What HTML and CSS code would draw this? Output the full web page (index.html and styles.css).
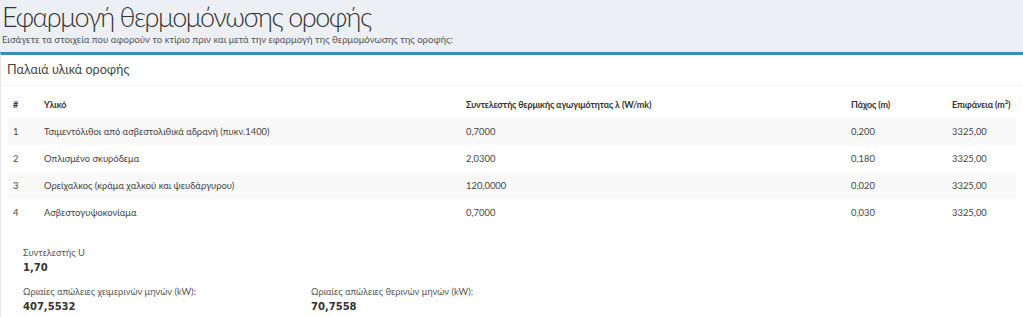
FILE: index.html
```html
<!DOCTYPE html>
<html lang="el">
<head>
<meta charset="utf-8">
<title>Εφαρμογή θερμομόνωσης οροφής</title>
<link rel="stylesheet" href="styles.css">
</head>
<body>
<section class="content-header">
  <h1>Εφαρμογή θερμομόνωσης οροφής</h1>
  <p class="lead">Εισάγετε τα στοιχεία που αφορούν το κτίριο πριν και μετά την εφαρμογή της θερμομόνωσης της οροφής:</p>
</section>
<div class="box">
  <div class="box-header"><h3 class="box-title">Παλαιά υλικά οροφής</h3></div>
  <div class="box-body">
    <table class="table">
      <colgroup>
        <col class="c-num"><col class="c-mat"><col class="c-lam"><col class="c-thk"><col class="c-area">
      </colgroup>
      <thead>
        <tr><th>#</th><th>Υλικό</th><th>Συντελεστής θερμικής αγωγιμότητας λ (W/mk)</th><th>Πάχος (m)</th><th>Επιφάνεια (m<sup>2</sup>)</th></tr>
      </thead>
      <tbody>
        <tr><td>1</td><td>Τσιμεντόλιθοι από ασβεστολιθικά αδρανή (πυκν.1400)</td><td>0,7000</td><td>0,200</td><td>3325,00</td></tr>
        <tr><td>2</td><td>Οπλισμένο σκυρόδεμα</td><td>2,0300</td><td>0,180</td><td>3325,00</td></tr>
        <tr><td>3</td><td>Ορείχαλκος (κράμα χαλκού και ψευδάργυρου)</td><td>120,0000</td><td>0,020</td><td>3325,00</td></tr>
        <tr><td>4</td><td>Ασβεστογυψοκονίαμα</td><td>0,7000</td><td>0,030</td><td>3325,00</td></tr>
      </tbody>
    </table>
    <div class="results">
      <div class="stat">
        <div class="label">Συντελεστής U</div>
        <div class="value">1,70</div>
      </div>
      <div class="stat-row">
        <div class="stat wide">
          <div class="label">Ωριαίες απώλειες χειμερινών μηνών (kW):</div>
          <div class="value">407,5532</div>
        </div>
        <div class="stat">
          <div class="label">Ωριαίες απώλειες θερινών μηνών (kW):</div>
          <div class="value">70,7558</div>
        </div>
      </div>
    </div>
  </div>
</div>
</body>
</html>
```
FILE: styles.css
```css
html, body {
  margin: 0;
  padding: 0;
}
body {
  background: #ecf0f5;
  font-family: Lato, "Noto Sans", sans-serif;
  color: #333;
  font-size: 11px;
  overflow: hidden;
}
.content-header {
  padding: 0 0 0 2px;
}
.content-header h1 {
  margin: 0;
  font-size: 27px;
  line-height: 33px;
  font-weight: 300;
  letter-spacing: -1.5px;
  color: #333;
}
.lead {
  margin: 0;
  font-size: 9.6px;
  line-height: 14px;
  color: #555;
  padding-bottom: 5px;
}
.box {
  background: #fff;
  border-top: 3px solid #3c8dbc;
  border-left: 1px solid #e6e6e6;
  box-shadow: 0 1px 1px rgba(0,0,0,0.1);
}
.box-header {
  border-bottom: 1px solid #f4f4f4;
  padding: 7px 6px 7px;
}
.box-title {
  margin: 0;
  font-size: 12.6px;
  line-height: 16px;
  font-weight: 400;
  color: #444;
}
.box-body {
  padding: 5px 7px 6px 7px;
}
.table {
  width: 100%;
  border-collapse: collapse;
  table-layout: fixed;
}
.c-num { width: 31px; }
.c-mat { width: 422px; }
.c-lam { width: 385px; }
.c-thk { width: 101px; }
.table th, .table td {
  text-align: left;
  padding: 5px 5px;
  line-height: 17px;
  font-size: 9.4px;
  white-space: nowrap;
  color: #444;
}
.table th {
  font-weight: 700;
  font-size: 9px;
  letter-spacing: -0.15px;
  color: #333;
}
.table sup {
  font-size: 6px;
  line-height: 0;
}
.table tbody tr:nth-child(odd) {
  background: #f9f9f9;
}
.results {
  padding: 19px 0 0 15px;
}
.stat-row {
  display: flex;
}
.stat.wide {
  width: 288px;
}
.label {
  font-size: 9.3px;
  line-height: 15px;
  color: #555;
}
.value {
  font-family: "DejaVu Sans", Verdana, sans-serif;
  font-weight: 700;
  font-size: 10px;
  line-height: 16px;
  color: #333;
}
.stat + .stat-row, .stat-row .value {
  margin-top: 0;
}
.stat > .value {
  padding-bottom: 8px;
}
.stat-row .stat > .value {
  padding-bottom: 0;
}
```
